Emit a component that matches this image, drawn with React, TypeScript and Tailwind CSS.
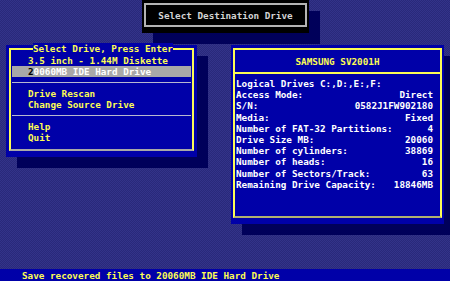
import React from 'react';

const font = { fontFamily: '"DejaVu Sans Mono", "Liberation Mono", monospace' };

const driveInfo: Array<[string, string]> = [
  ['Logical Drives C:,D:,E:,F:', ''],
  ['Access Mode:', 'Direct'],
  ['S/N:', '0582J1FW902180'],
  ['Media:', 'Fixed'],
  ['Number of FAT-32 Partitions:', '4'],
  ['Drive Size MB:', '20060'],
  ['Number of cylinders:', '38869'],
  ['Number of heads:', '16'],
  ['Number of Sectors/Track:', '63'],
  ['Remaining Drive Capacity:', '18846MB'],
];

export default function App() {
  return (
    <div
      className="w-[450px] h-[281px] overflow-hidden flex flex-col font-bold text-[9.3px] leading-[11px] whitespace-pre bg-[#2d2d80] bg-[repeating-conic-gradient(#29297a_0_25%,#33338a_0_50%)] bg-size-[2px_2px]"
      style={font}
    >
      {/* Title box */}
      <div className="ml-[142px] w-[167px] h-[33px] bg-black pt-[3px] pb-[6px] px-[2px] shadow-[11px_11px_0_#00005a]">
        <div className="h-full border-2 border-[#b4b4b4] flex items-center justify-center text-[#d4d4d4]">
          Select Destination Drive
        </div>
      </div>

      <div className="flex items-start mt-[12px]">
        {/* Left menu panel */}
        <div className="ml-[6px] w-[191px] h-[112px] bg-[#0000a8] pt-[3px] px-[3px] pb-[6px] shadow-[11px_11px_0_#00005a]">
          <div className="relative h-full border-2 border-[#fcfc54] border-b-[#a8a8a8] pt-[5px]">
            <div className="absolute left-[22px] top-[-7px] bg-[#0000a8] text-[#fcfc54]">Select Drive, Press Enter</div>
            <div className="pl-[17px] text-[#fcfc54]">3.5 inch - 1.44M Diskette</div>
            <div className="mx-px pl-[16px] bg-[#a8a8a8] text-white">
              <span className="text-black">2</span>0060MB IDE Hard Drive
            </div>
            <div className="mx-px mt-[5px] mb-[5px] h-px bg-[#b8b8d0]"></div>
            <div className="pl-[17px] text-[#fcfc54]">Drive Rescan</div>
            <div className="pl-[17px] text-[#fcfc54]">Change Source Drive</div>
            <div className="mx-px mt-[5px] mb-[5px] h-px bg-[#b8b8d0]"></div>
            <div className="pl-[17px] text-[#fcfc54]">Help</div>
            <div className="pl-[17px] text-[#fcfc54]">Quit</div>
          </div>
        </div>

        {/* Right drive info panel */}
        <div className="ml-[34px] w-[213px] h-[179px] bg-[#0000a8] pt-[3px] px-[2px] pb-[6px] shadow-[11px_11px_0_#00005a]">
          <div className="h-full border-2 border-[#fcfc54] border-b-[#b0b070]">
            <div className="h-[22px] flex items-center justify-center text-[#fcfc54]">SAMSUNG SV2001H</div>
            <div className="h-[2px] bg-[#fcfc54]"></div>
            <div className="pt-[4px] pl-[1px] pr-[7px] text-white leading-[11.2px]">
              {driveInfo.map(([label, value]) => (
                <div key={label} className="flex justify-between">
                  <span>{label}</span>
                  <span>{value}</span>
                </div>
              ))}
            </div>
          </div>
        </div>
      </div>

      {/* Status bar */}
      <div className="mt-auto h-[12px] bg-[#0000a8] pl-[22px] text-[#fcfc54] flex items-center">
        Save recovered files to 20060MB IDE Hard Drive
      </div>
    </div>
  );
}
